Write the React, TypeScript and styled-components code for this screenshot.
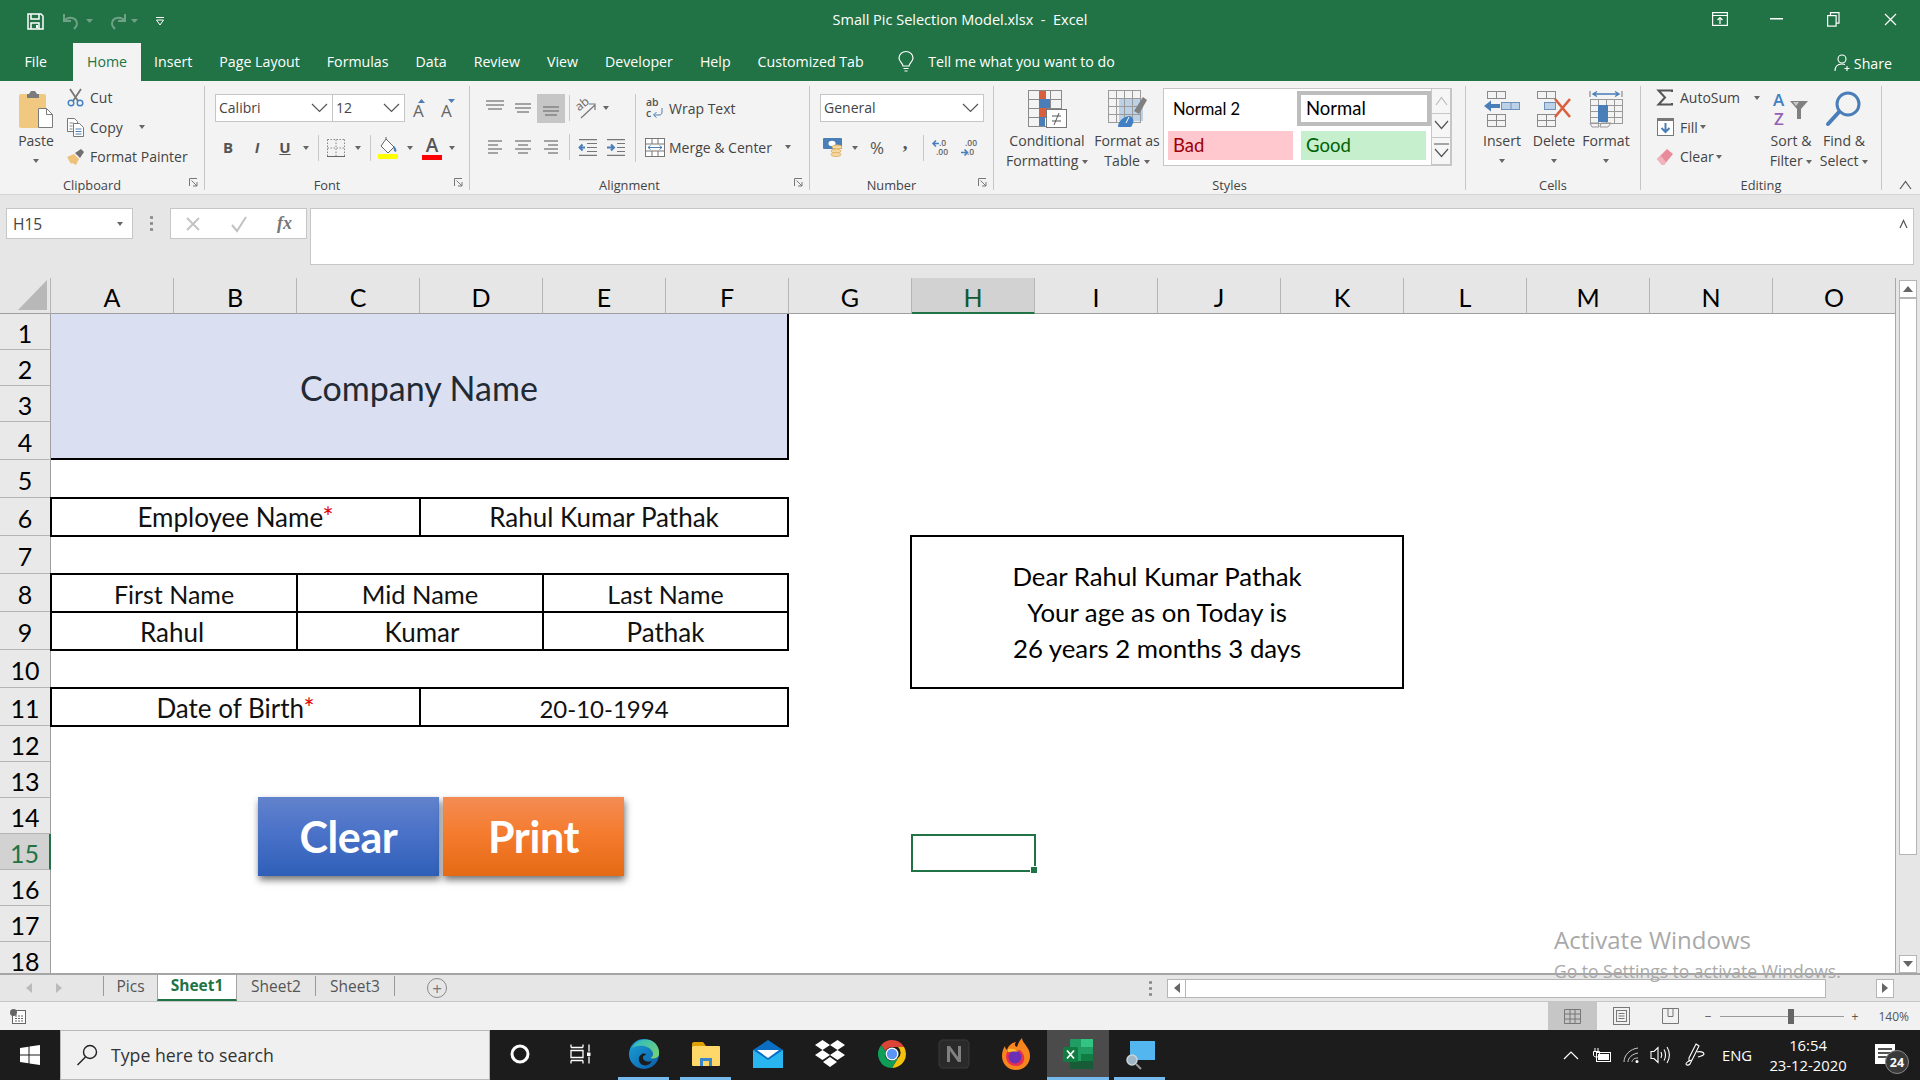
import React from "react";
import styled, { createGlobalStyle } from "styled-components";

const UI = `"Open Sans", "Noto Sans", sans-serif`;
const CAL = `Lato, "Liberation Sans", sans-serif`;
const GREEN = "#217346";

const Global = createGlobalStyle`
  html, body { margin: 0; padding: 0; background: #fff; }
  * { box-sizing: border-box; }
  svg { display: block; flex: none; overflow: visible; }
`;

const Page = styled.div`
  position: relative;
  width: 1920px;
  height: 1080px;
  overflow: hidden;
  display: flex;
  flex-direction: column;
  font-family: ${UI};
  color: #444;
`;

/* ---------- title bar ---------- */
const TitleBar = styled.div`
  height: 43px;
  background: ${GREEN};
  display: grid;
  grid-template-columns: 1fr auto 1fr;
  align-items: center;
  color: #fff;
`;
const Qat = styled.div`
  display: flex;
  align-items: center;
  padding-left: 27px;
`;
const Title = styled.div`
  font-size: 14.5px;
  padding-bottom: 4px;
`;
const WinButtons = styled.div`
  display: flex;
  justify-content: flex-end;
  align-items: center;
  padding-right: 1px;
  padding-bottom: 4px;
`;
const WinBtn = styled.div`
  width: 57px;
  display: flex;
  justify-content: center;
`;

/* ---------- tabs ---------- */
const TabRow = styled.div`
  height: 38px;
  background: ${GREEN};
  display: flex;
  align-items: stretch;
  padding-left: 11px;
  color: #fff;
  font-size: 14.2px;
`;
const Tab = styled.div<{ $active?: boolean; $after?: number }>`
  padding: 0 13.5px;
  margin-right: ${(p) => p.$after ?? 0}px;
  display: flex;
  align-items: center;
  background: ${(p) => (p.$active ? "#f3f3f3" : "transparent")};
  color: ${(p) => (p.$active ? GREEN : "#fff")};
`;
const TellMe = styled.div`
  display: flex;
  align-items: center;
  gap: 14px;
  margin-left: 21px;
`;
const Share = styled.div`
  margin-left: auto;
  padding-right: 28px;
  padding-top: 3px;
  display: flex;
  align-items: center;
  gap: 3px;
`;

/* ---------- ribbon ---------- */
const Ribbon = styled.div`
  height: 115px;
  background: #f3f3f3;
  border-bottom: 1px solid #d4d4d4;
  display: flex;
  padding-top: 5px;
`;
const Group = styled.div<{ $w: number }>`
  position: relative;
  width: ${(p) => p.$w}px;
  height: 104px;
  border-right: 1px solid #c6c6c6;
  display: flex;
  flex-direction: column;
`;
const GroupBody = styled.div<{ $pad?: number }>`
  flex: 1;
  display: flex;
  padding-left: ${(p) => p.$pad ?? 0}px;
  min-height: 0;
`;
const GroupLabel = styled.div<{ $launcher?: boolean }>`
  height: 16px;
  line-height: 16px;
  margin-top: -3px;
  transform: translateY(3px);
  text-align: center;
  font-size: 12.8px;
  color: #444;
  padding-right: ${(p) => (p.$launcher ? 20 : 0)}px;
`;
const Launcher = styled.div`
  position: absolute;
  right: 6px;
  bottom: 3px;
`;
const PasteBtn = styled.div`
  width: 62px;
  margin-left: 5px;
  padding-top: 4px;
  display: flex;
  flex-direction: column;
  align-items: center;
  font-size: 14px;
  line-height: 20px;
  flex: none;
`;
const PasteGap = styled.div`
  height: 3px;
`;
const SmallCol = styled.div<{ $w?: number }>`
  width: ${(p) => (p.$w ? `${p.$w}px` : "auto")};
  display: flex;
  flex-direction: column;
  gap: 5.5px;
  flex: none;
`;
const SmallRow = styled.div`
  height: 24px;
  display: flex;
  align-items: center;
  font-size: 14px;
  white-space: nowrap;
  gap: 6px;
`;
const IconBox = styled.div<{ $w: number }>`
  width: ${(p) => p.$w}px;
  display: flex;
  justify-content: center;
  flex: none;
`;
const ToolCol = styled.div`
  display: flex;
  flex-direction: column;
  padding-top: 8px;
  gap: 14px;
`;
const ToolRow = styled.div<{ $h?: number; $pad?: number }>`
  height: ${(p) => p.$h ?? 28}px;
  display: flex;
  align-items: center;
  padding-left: ${(p) => p.$pad ?? 0}px;
  font-size: 14px;
  white-space: nowrap;
`;
const Slot = styled.div<{ $w: number; $on?: boolean }>`
  width: ${(p) => p.$w}px;
  height: 100%;
  flex: none;
  display: flex;
  align-items: center;
  justify-content: center;
  background: ${(p) => (p.$on ? "#c6c6c6" : "transparent")};
`;
const VSep = styled.div<{ $tall?: boolean }>`
  width: 1px;
  height: ${(p) => (p.$tall ? 68 : 26)}px;
  margin-top: ${(p) => (p.$tall ? 40 : 0)}px;
  background: #c9c9c9;
`;
const Select = styled.div<{ $w: number }>`
  width: ${(p) => p.$w}px;
  height: 28px;
  background: #fff;
  border: 1px solid #c6c6c6;
  margin-right: -1px;
  padding: 0 4px 0 3px;
  display: flex;
  align-items: center;
  justify-content: space-between;
  font-size: 14px;
  color: #444;
`;
const Caret = styled.span<{ $gap?: number }>`
  display: inline-block;
  width: 0;
  height: 0;
  border: 3.5px solid transparent;
  border-top: 4px solid #666;
  border-bottom: none;
  margin-left: ${(p) => p.$gap ?? 0}px;
  vertical-align: middle;
  flex: none;
`;
const Glyph = styled.span<{ $bold?: boolean; $it?: boolean; $size?: number; $under?: boolean; $font?: string; $lift?: number }>`
  font-family: ${(p) => p.$font ?? UI};
  font-weight: ${(p) => (p.$bold ? 700 : 400)};
  font-style: ${(p) => (p.$it ? "italic" : "normal")};
  font-size: ${(p) => p.$size ?? 15}px;
  text-decoration: ${(p) => (p.$under ? "underline" : "none")};
  padding-bottom: ${(p) => p.$lift ?? 0}px;
  color: #555;
  line-height: 1;
`;
const ColorA = styled.div<{ $c: string }>`
  width: 20px;
  text-align: center;
  font-size: 19px;
  font-weight: 600;
  line-height: 19px;
  color: #555;
  border-bottom: 5px solid ${(p) => p.$c};
`;
const Big = styled.div<{ $w: number }>`
  width: ${(p) => p.$w}px;
  padding-top: 4px;
  flex: none;
  display: flex;
  flex-direction: column;
  align-items: center;
  font-size: 14.1px;
  line-height: 20px;
  white-space: nowrap;
`;
const BigIcon = styled.div`
  height: 38px;
  margin-bottom: 3px;
  display: flex;
  align-items: center;
`;
const BigCaret = styled.div`
  height: 20px;
  display: flex;
  align-items: center;
`;
const Gallery = styled.div`
  width: 289px;
  height: 78px;
  margin-top: 2px;
  background: #fff;
  border: 1px solid #c6c6c6;
  display: flex;
  flex: none;
`;
const StyleGrid = styled.div`
  width: 267px;
  display: grid;
  grid-template-columns: 129px 138px;
  grid-template-rows: 39px 37px;
`;
const StyleCell = styled.div<{ $bg?: string; $fg?: string; $sel?: boolean; $m: string; $pad: number; $size: number }>`
  font-family: ${CAL};
  font-size: ${(p) => p.$size}px;
  display: flex;
  align-items: center;
  padding-left: ${(p) => p.$pad}px;
  color: ${(p) => p.$fg ?? "#000"};
  margin: ${(p) => p.$m};
  background: ${(p) => p.$bg ?? "#fff"};
  border: ${(p) => (p.$sel ? "4px solid #bdbdbd" : "none")};
`;
const GalleryScroll = styled.div`
  width: 21px;
  display: flex;
  flex-direction: column;
`;
const ScrollCell = styled.div<{ $h: number }>`
  height: ${(p) => p.$h}px;
  border: 1px solid #c6c6c6;
  border-top: none;
  background: #f6f6f6;
  display: flex;
  flex-direction: column;
  align-items: center;
  justify-content: center;
  gap: 3px;
`;
const Collapse = styled.div`
  flex: 1;
  display: flex;
  align-items: flex-end;
  justify-content: center;
  padding: 0 0 4px 8px;
`;

/* ---------- formula bar ---------- */
const FormulaBar = styled.div`
  height: 83px;
  background: #e6e6e6;
  display: flex;
  align-items: flex-start;
  padding: 13px 0 0 6px;
`;
const NameBox = styled.div`
  width: 127px;
  height: 31px;
  background: #fff;
  border: 1px solid #c6c6c6;
  display: flex;
  align-items: center;
  justify-content: space-between;
  padding: 0 9px 0 6px;
  font-size: 15.5px;
`;
const Grip = styled.div`
  width: 37px;
  height: 31px;
  display: flex;
  align-items: center;
  justify-content: center;
`;
const FnBox = styled.div`
  width: 137px;
  height: 31px;
  background: #fff;
  border: 1px solid #c6c6c6;
  display: flex;
  align-items: center;
  padding-left: 14px;
  gap: 29px;
`;
const FxText = styled.span`
  font-family: "Liberation Serif", serif;
  font-style: italic;
  font-weight: 700;
  font-size: 18px;
  color: #777;
`;
const FormulaInput = styled.div`
  width: 1604px;
  height: 57px;
  margin-left: 3px;
  background: #fff;
  border: 1px solid #c6c6c6;
  display: flex;
  justify-content: flex-end;
  padding: 10px 5px 0 0;
`;

/* ---------- sheet ---------- */
const SheetArea = styled.div`
  height: 695px;
  display: flex;
  background: #e6e6e6;
`;
const Grid = styled.div`
  position: relative;
  width: 1896px;
  height: 695px;
  overflow: hidden;
  background: #fff;
  border-right: 1px solid #a8a8a8;
  display: grid;
  grid-template-columns: 51px repeat(15, 123px);
  grid-template-rows: 36px 36px 36px 36px 38px 38px repeat(6, 38px) repeat(7, 36px);
`;
const Corner = styled.div`
  background: #e6e6e6;
  border-bottom: 1px solid #9f9f9f;
  border-right: 1px solid #b5b5b5;
  display: flex;
  align-items: flex-end;
  justify-content: flex-end;
  padding: 0 3px 3px 0;
`;
const ColHead = styled.div<{ $on?: boolean }>`
  background: ${(p) => (p.$on ? "#d2d2d2" : "#e6e6e6")};
  border-right: 1px solid #b5b5b5;
  border-bottom: ${(p) => (p.$on ? `2px solid ${GREEN}` : "1px solid #9f9f9f")};
  font-family: ${CAL};
  font-size: 25px;
  color: ${(p) => (p.$on ? "#0f5a32" : "#000")};
  display: flex;
  align-items: center;
  justify-content: center;
  padding-top: 3px;
`;
const RowHead = styled.div<{ $on?: boolean; $row: number }>`
  grid-column: 1;
  grid-row: ${(p) => p.$row + 1};
  background: ${(p) => (p.$on ? "#d2d2d2" : "#e9e9e9")};
  border-bottom: 1px solid #b5b5b5;
  border-right: ${(p) => (p.$on ? `2px solid ${GREEN}` : "1px solid #9f9f9f")};
  font-family: ${CAL};
  font-size: 25px;
  padding-top: 2px;
  color: ${(p) => (p.$on ? GREEN : "#000")};
  display: flex;
  align-items: center;
  justify-content: center;
`;
const Banner = styled.div`
  grid-row: 2 / 6;
  grid-column: 2 / 8;
  background: #dae0f2;
  border-right: 2px solid #000;
  border-bottom: 2px solid #000;
  display: flex;
  align-items: center;
  justify-content: center;
  font-family: ${CAL};
  font-size: 34px;
  color: #222b35;
  padding-top: 2px;
`;
const Cell = styled.div<{ $row: number; $from: number; $to: number; $shift?: number; $size?: number }>`
  grid-row: ${(p) => p.$row + 1};
  grid-column: ${(p) => p.$from + 1} / ${(p) => p.$to + 2};
  margin: -1px ${(p) => (p.$to === 6 ? 0 : -1)}px -1px -1px;
  border: 2px solid #000;
  display: flex;
  align-items: center;
  justify-content: center;
  font-family: ${CAL};
  font-size: ${(p) => p.$size ?? 26}px;
  color: #111;
  padding-top: ${(p) => (p.$row === 6 ? 0 : 2)}px;
  padding-left: ${(p) => ((p.$shift ?? 0) > 0 ? p.$shift : 0)}px;
  padding-right: ${(p) => ((p.$shift ?? 0) < 0 ? -(p.$shift as number) : 0)}px;
`;
const Star = styled.span`
  color: #e00000;
`;
const Selection = styled.div`
  position: absolute;
  left: 911px;
  top: 556px;
  width: 125px;
  height: 38px;
  border: 2px solid ${GREEN};
  &::after {
    content: "";
    position: absolute;
    right: -4px;
    bottom: -4px;
    width: 6px;
    height: 6px;
    background: ${GREEN};
    border: 1px solid #fff;
  }
`;
const MessageBox = styled.div`
  position: absolute;
  left: 910px;
  top: 257px;
  width: 494px;
  height: 154px;
  border: 2px solid #000;
  background: #fff;
  display: flex;
  flex-direction: column;
  align-items: center;
  justify-content: center;
  font-family: ${CAL};
  font-size: 25.8px;
  line-height: 36px;
  color: #000;
`;
const MacroButton = styled.div<{ $left: number; $top: string; $mid: string; $bot: string }>`
  position: absolute;
  left: ${(p) => p.$left}px;
  top: 519px;
  width: 181px;
  height: 79px;
  background: linear-gradient(${(p) => p.$top}, ${(p) => p.$mid} 45%, ${(p) => p.$bot});
  box-shadow: 1px 4px 7px rgba(0, 0, 0, 0.55);
  display: flex;
  align-items: center;
  justify-content: center;
  font-family: ${CAL};
  font-weight: 700;
  font-size: 43px;
  letter-spacing: -0.4px;
  color: #fff;
`;
const VScroll = styled.div`
  width: 24px;
  padding: 0 3px 0 3px;
  display: flex;
  flex-direction: column;
`;
const ScrollBtn = styled.div<{ $w?: number; $h?: number }>`
  width: ${(p) => (p.$w ? `${p.$w}px` : "100%")};
  height: ${(p) => (p.$h ? `${p.$h}px` : "100%")};
  flex: none;
  background: #fff;
  border: 1px solid #b5b5b5;
  display: flex;
  align-items: center;
  justify-content: center;
`;
const VThumb = styled.div`
  height: 557px;
  background: #fff;
  border: 1px solid #b5b5b5;
`;
const VGap = styled.div<{ $h: number }>`
  height: ${(p) => p.$h}px;
  flex: none;
`;

/* ---------- sheet tabs ---------- */
const TabBar = styled.div`
  height: 29px;
  background: #e6e6e6;
  border-top: 2px solid #a5a5a5;
  border-bottom: 1px solid #c6c6c6;
  display: flex;
  align-items: center;
  font-size: 15.5px;
  color: #555;
`;
const NavArrows = styled.div`
  width: 103px;
  height: 100%;
  display: flex;
  align-items: center;
  padding-left: 26px;
  gap: 24px;
`;
const TabDivider = styled.div`
  width: 1px;
  height: 20px;
  margin-top: -4px;
  background: #9a9a9a;
`;
const SheetTab = styled.div<{ $active?: boolean; $w: number }>`
  width: ${(p) => p.$w}px;
  height: 100%;
  display: flex;
  align-items: center;
  justify-content: center;
  padding-bottom: 5px;
  background: ${(p) => (p.$active ? "#fff" : "transparent")};
  font-weight: ${(p) => (p.$active ? 700 : 400)};
  color: ${(p) => (p.$active ? GREEN : "#555")};
  border-bottom: ${(p) => (p.$active ? `2px solid ${GREEN}` : "none")};
  border-left: ${(p) => (p.$active ? "1px solid #a5a5a5" : "none")};
  border-right: ${(p) => (p.$active ? "1px solid #a5a5a5" : "none")};
`;
const AddSheet = styled.div`
  margin-left: 32px;
  width: 20px;
  height: 20px;
  border: 1.5px solid #8a8a8a;
  border-radius: 50%;
  display: flex;
  align-items: center;
  justify-content: center;
  font-size: 17px;
  line-height: 1;
  color: #777;
`;
const HScroll = styled.div`
  margin-right: 26px;
  width: 727px;
  height: 19px;
  display: flex;
  align-items: center;
`;
const HThumb = styled.div`
  width: 640px;
  height: 19px;
  background: #fff;
  border: 1px solid #b5b5b5;
  border-left: none;
`;
const HFill = styled.div`
  flex: 1;
`;
const HGrip = styled.div`
  margin-left: auto;
  margin-right: 15px;
`;

/* ---------- status bar ---------- */
const StatusBar = styled.div`
  height: 28px;
  background: #f1f1f1;
  display: flex;
  align-items: center;
  padding-left: 10px;
  font-size: 12px;
  color: #555;
`;
const Views = styled.div`
  margin-left: auto;
  height: 100%;
  display: flex;
  align-items: center;
`;
const ViewBtn = styled.div<{ $on?: boolean }>`
  width: 49px;
  height: 100%;
  display: flex;
  align-items: center;
  justify-content: center;
  background: ${(p) => (p.$on ? "#c6c6c6" : "transparent")};
`;
const Zoom = styled.div`
  display: flex;
  align-items: center;
  gap: 8px;
  margin-left: 10px;
  padding-right: 11px;
`;
const ZoomTrack = styled.div`
  position: relative;
  width: 124px;
  height: 1px;
  background: #9a9a9a;
`;
const ZoomThumb = styled.div`
  position: absolute;
  left: 68px;
  top: -7px;
  width: 6px;
  height: 15px;
  background: #666;
`;
const ZoomPct = styled.div`
  margin-left: 12px;
  font-size: 12px;
`;

/* ---------- taskbar ---------- */
const Taskbar = styled.div`
  height: 50px;
  background: #1c1c1c;
  display: flex;
  align-items: stretch;
  color: #fff;
`;
const StartBtn = styled.div`
  width: 60px;
  display: flex;
  align-items: center;
  justify-content: center;
`;
const SearchBox = styled.div`
  width: 430px;
  background: #f0f0f0;
  border: 1px solid #b8b8b8;
  display: flex;
  align-items: center;
  padding-left: 15px;
  gap: 13px;
  font-size: 17.7px;
  color: #333;
`;
const TaskSlot = styled.div<{ $w?: number; $open?: boolean; $active?: boolean; $ml?: number }>`
  position: relative;
  width: ${(p) => p.$w ?? 62}px;
  margin-left: ${(p) => p.$ml ?? 0}px;
  display: flex;
  align-items: center;
  justify-content: center;
  padding-bottom: 3px;
  background: ${(p) => (p.$active ? "#4b4b4b" : "transparent")};
  flex: none;
  &::after {
    content: "";
    display: ${(p) => (p.$open ? "block" : "none")};
    position: absolute;
    bottom: 0;
    left: ${(p) => (p.$active ? 0 : 5)}px;
    right: ${(p) => (p.$active ? 0 : 6)}px;
    height: 3px;
    background: #76b9ed;
  }
`;
const Tray = styled.div`
  margin-left: auto;
  display: flex;
  align-items: center;
  font-size: 14.8px;
`;
const TrayItem = styled.div<{ $w: number }>`
  width: ${(p) => p.$w}px;
  display: flex;
  justify-content: center;
`;
const Clock = styled.div`
  width: 100px;
  text-align: center;
  line-height: 20px;
  font-size: 14.8px;
`;
const Notify = styled.div`
  position: relative;
  width: 62px;
  height: 100%;
  padding-right: 8px;
  display: flex;
  align-items: center;
  justify-content: center;
`;
const Badge = styled.div`
  position: absolute;
  left: 27px;
  top: 20px;
  width: 24px;
  height: 24px;
  border-radius: 50%;
  background: #3a3a3a;
  border: 1px solid #888;
  font-size: 12.5px;
  font-weight: 700;
  display: flex;
  align-items: center;
  justify-content: center;
`;

const Watermark = styled.div`
  position: absolute;
  left: 1554px;
  top: 923px;
  color: #a9a9a9;
  pointer-events: none;
`;
const WmTitle = styled.div`
  font-size: 24px;
  line-height: 34px;
`;
const WmSub = styled.div`
  font-size: 17.5px;
  line-height: 24px;
  margin-top: 2px;
`;

/* ---------- icons ---------- */
const BLUE = "#4a7eb8";
const Lines = ({ rows, w = 26, h = 22 }: { rows: number[][]; w?: number; h?: number }) => (
  <svg width={w} height={h} stroke="#777" strokeWidth="1.3">
    {rows.map((r, i) => (
      <line key={i} x1={r[0]} x2={r[1]} y1={r[2]} y2={r[2]} />
    ))}
  </svg>
);
const Cells = ({ x, y, cw, ch, nx, ny, c = "#8a8a8a" }: { x: number; y: number; cw: number; ch: number; nx: number; ny: number; c?: string }) => (
  <g stroke={c} fill="none" strokeWidth="1">
    {Array.from({ length: ny }).map((_, r) =>
      Array.from({ length: nx }).map((_, k) => <rect key={`${r}${k}`} x={x + k * cw + 0.5} y={y + r * ch + 0.5} width={cw} height={ch} />)
    )}
  </g>
);

const SaveIcon = () => (
  <svg width="17" height="17" fill="none" stroke="#fff" strokeWidth="1.5">
    <path d="M1 1h13l2 2v13H1z" />
    <path d="M4 1v5h8V1M4 16v-6h8v6" />
    <rect x="9" y="12" width="2" height="3" fill="#fff" stroke="none" />
  </svg>
);
const UndoIcon = ({ flip }: { flip?: boolean }) => (
  <svg width="20" height="18" fill="none" stroke="#6ea186" strokeWidth="2" style={flip ? { transform: "scaleX(-1)" } : undefined}>
    <path d="M2 2v7h7M2 9c4-5 13-4 13 3 0 2-1 3-3 5" />
  </svg>
);
const DimCaret = () => (
  <svg width="7" height="4">
    <path d="M0 0h7L3.500 4z" fill="#6ea186" />
  </svg>
);
const QatMore = () => (
  <svg width="10" height="10" fill="none" stroke="#fff">
    <path d="M1 1.500h8M1.500 4l3.500 5 3.500-5z" />
  </svg>
);
const RibbonOpt = () => (
  <svg width="16" height="14" fill="none" stroke="#fff" strokeWidth="1.2">
    <rect x="0.6" y="0.6" width="14.8" height="12.8" />
    <path d="M1 3.500h14M8 12V6M5.500 8L8 5.500 10.500 8" />
  </svg>
);
const MinIcon = () => (
  <svg width="13" height="2">
    <rect width="13" height="1.5" fill="#fff" />
  </svg>
);
const RestoreIcon = () => (
  <svg width="13" height="15" fill="none" stroke="#fff" strokeWidth="1.2">
    <rect x="0.6" y="3.6" width="8.5" height="10.5" />
    <path d="M3.500 3.500V.6h8.500v10.500H9" />
  </svg>
);
const CloseIcon = () => (
  <svg width="13" height="13" stroke="#fff" strokeWidth="1.2">
    <path d="M1 1l11 11M12 1L1 12" />
  </svg>
);
const Bulb = () => (
  <svg width="16" height="22" fill="none" stroke="#fff" strokeWidth="1.2">
    <path d="M5 15c0-3-4-4-4-8a7 6.500 0 0 1 14 0c0 4-4 5-4 8z" />
    <path d="M5.500 17.500h5M6.500 20h3" />
  </svg>
);
const ShareIcon = () => (
  <svg width="17" height="18" fill="none" stroke="#fff" strokeWidth="1.1">
    <circle cx="8" cy="5" r="4" />
    <path d="M1 17c0-5 3-7 7-7 1 0 2 .2 3 .6M13 12v5M10.500 14.500h5" />
  </svg>
);
const Chevron = ({ up, c = "#555", w = 17 }: { up?: boolean; c?: string; w?: number }) => (
  <svg width={w} height="10" fill="none" stroke={c} strokeWidth="1.2">
    <path d={up ? `M1 9L${w / 2} 1.500 ${w - 1} 9` : `M1 1L${w / 2} 8.500 ${w - 1} 1`} />
  </svg>
);
const PasteIcon = () => (
  <svg width="34" height="38">
    <rect x="0" y="4" width="27" height="34" rx="2" fill="#f0c880" />
    <path d="M8 4h2l2-3h4l2 3h2v4H8z" fill="#7b7b7b" />
    <path d="M19.500 18.500h8l6 6v13h-14z" fill="#fff" stroke="#7b7b7b" />
    <path d="M27.500 18.500v6h6" fill="none" stroke="#7b7b7b" />
  </svg>
);
const CutIcon = () => (
  <svg width="17" height="19" fill="none">
    <path d="M3 1l8 12M14 1L6 13" stroke="#777" strokeWidth="1.8" />
    <circle cx="4" cy="15" r="2.800" stroke="#3f7fc2" strokeWidth="1.4" />
    <circle cx="13" cy="15" r="2.800" stroke="#3f7fc2" strokeWidth="1.4" />
  </svg>
);
const CopyIcon = () => (
  <svg width="17" height="19" fill="#fff" stroke="#777">
    <path d="M.5.500h7l3 3v10H.5z" />
    <path d="M6.500 5.500h6l4 4v9h-10z" />
    <path d="M8.500 11h6M8.500 13.500h6M8.500 16h6" stroke="#4a7eb8" />
    <path d="M2.500 5h4M2.500 8h3M2.500 11h3" stroke="#888" />
  </svg>
);
const BrushIcon = () => (
  <svg width="18" height="16">
    <path d="M0 8l7-3 5 5-3 6-4-2-1 1z" fill="#efc27a" />
    <path d="M8 4l6-4 3 3-4 6z" fill="#707070" />
  </svg>
);
const GrowA = ({ down }: { down?: boolean }) => (
  <svg width="20" height="22">
    <text x="5" y="20" fontFamily="Open Sans" fontSize="17" fill="#666">
      A
    </text>
    <path d={down ? "M12 2h7l-3.500 4z" : "M10 6h7l-3.500-4z"} fill={BLUE} />
  </svg>
);
const BorderIcon = () => (
  <svg width="18" height="18" fill="none" stroke="#888" strokeDasharray="1.5 1.5">
    <path d="M.5.500h17M.5 9h17M.5.500v17M9 .500v17M17.500.500v17" />
    <path d="M0 17.500h18" strokeDasharray="none" stroke="#666" />
  </svg>
);
const FillIcon = () => (
  <svg width="20" height="22">
    <path d="M8 2l8 8-6 6-7-7z" fill="#fff" stroke="#666" />
    <path d="M8 2V0" stroke="#666" />
    <path d="M16 9c2 2 3 4 2 6-2 0-3-3-2-6z" fill={BLUE} />
    <rect y="17" width="20" height="5" fill="#ffff00" />
  </svg>
);
const OrientIcon = () => (
  <svg width="20" height="22" fill="none">
    <text x="0" y="11" fontFamily="Open Sans" fontSize="12" fill="#666" transform="rotate(-38 6 10)">
      ab
    </text>
    <path d="M4 21L18 8M12 7h6v6" stroke="#777" strokeWidth="1.2" />
  </svg>
);
const WrapIcon = () => (
  <svg width="18" height="22">
    <text x="0" y="9" fontFamily="Open Sans" fontWeight="600" fontSize="10.5" fill="#555">
      ab
    </text>
    <text x="0" y="20" fontFamily="Open Sans" fontWeight="600" fontSize="10.5" fill="#555">
      c
    </text>
    <path d="M16 11v4c0 2-1 3-3 3H8M10.500 15l-3 3 3 2.500" fill="none" stroke={BLUE} />
  </svg>
);
const MergeIcon = () => (
  <svg width="20" height="19" fill="none" stroke="#777">
    <rect x=".5" y=".5" width="19" height="18" fill="#fff" />
    <path d="M.5 6h19M.5 13h19M7 .500V6M13 .500V6M7 13v5.500M13 13v5.500" />
    <path d="M3 9.500h14M5.500 7.500l-2.500 2 2.500 2M14.500 7.500l2.500 2-2.500 2" stroke={BLUE} />
  </svg>
);
const IndentIcon = ({ out }: { out?: boolean }) => (
  <svg width="19" height="17" fill="none" stroke="#777" strokeWidth="1.2">
    <path d={out ? "M0 .6h18M8 4.500h10M8 8.500h10M8 12.500h10M0 16.400h18" : "M0 .6h18M10 4.500h8M10 8.500h8M10 12.500h8M0 16.400h18"} />
    <path d={out ? "M6 8.500H1M3.500 5.500L.6 8.500l3 3" : "M0 8.500h6M4 5.500l3 3-3 3"} stroke={BLUE} strokeWidth="2" />
  </svg>
);
const CurrencyIcon = () => (
  <svg width="20" height="19">
    <rect width="19" height="11" rx="1" fill={BLUE} />
    <ellipse cx="9" cy="5.500" rx="3.500" ry="2.700" fill="#fff" />
    <ellipse cx="14" cy="9" rx="5" ry="2" fill="#f3d8a3" stroke="#e2b56a" />
    <ellipse cx="13" cy="13" rx="5" ry="2" fill="#f3d8a3" stroke="#e2b56a" />
    <ellipse cx="13" cy="16.500" rx="5" ry="2" fill="#f3d8a3" stroke="#e2b56a" />
  </svg>
);
const Decimal = ({ more }: { more?: boolean }) => (
  <svg width="16" height="18" fontFamily="Open Sans" fontSize="8.500" fontWeight="600" fill="#666">
    <text x={more ? 6 : 4} y="7">
      {more ? ".0" : ".00"}
    </text>
    <text x={more ? 3 : 6} y="16">
      {more ? ".00" : ".0"}
    </text>
    <path d={more ? "M0 4.500h6M3 1.500l-3 3 3 3" : "M0 13.500h6M3.500 10.500l3 3-3 3"} stroke={BLUE} strokeWidth="1.600" fill="none" />
  </svg>
);
const CondIcon = () => (
  <svg width="39" height="38">
    <Cells x={0} y={0} cw={11} ch={9} nx={3} ny={4} />
    <rect x="11" y="1" width="7" height="8" fill="#d9603c" />
    <rect x="11" y="9" width="11" height="9" fill="#4a7eb8" />
    <rect x="11" y="18" width="9" height="9" fill="#d9603c" />
    <rect x="11" y="27" width="6" height="9" fill="#4a7eb8" />
    <rect x="18.500" y="19.500" width="20" height="18" fill="#fff" stroke="#777" />
    <path d="M24 26h9M24 31h9M31 23l-5 12" stroke="#555" fill="none" />
  </svg>
);
const TableIcon = () => (
  <svg width="39" height="38">
    <rect x="11" y="8" width="24" height="23" fill="#bcd0e6" />
    <Cells x={0} y={0} cw={8} ch={8} nx={4} ny={4} c="#9a9a9a" />
    <path d="M26 21l9-14 4 3-8 14z" fill="#808080" />
    <path d="M10 37c0-6 6-11 12-11 3 1 4 5 3 7-1 2-1 4-3 4z" fill="#3f7fc2" />
    <path d="M21 27l-3 6" stroke="#fff" />
  </svg>
);
const InsertIcon = () => (
  <svg width="37" height="36">
    <Cells x={3} y={0} cw={9} ch={7} nx={2} ny={1} />
    <rect x="17.500" y="11.500" width="18" height="7" fill="#bcd0e6" stroke="#6d92ba" />
    <path d="M27 11v8" stroke="#6d92ba" />
    <path d="M0 15l7-5.500v3.500h9v4H7v3.500z" fill={BLUE} />
    <Cells x={3} y={23} cw={9} ch={6} nx={2} ny={2} />
  </svg>
);
const DeleteIcon = () => (
  <svg width="37" height="36">
    <Cells x={1} y={0} cw={9} ch={7} nx={2} ny={1} />
    <rect x="8.500" y="11.500" width="11" height="7" fill="#bcd0e6" stroke="#6d92ba" />
    <Cells x={1} y={23} cw={9} ch={6} nx={2} ny={2} />
    <path d="M19 8l15 18M34 8L19 26" stroke="#d9603c" strokeWidth="2.600" />
  </svg>
);
const FormatIcon = () => (
  <svg width="34" height="38" fill="none">
    <path d="M1 1v6M33 1v6" stroke="#777" />
    <path d="M4 4h26M8 1.500L4 4l4 2.500M26 1.500L30 4l-4 2.500" stroke={BLUE} strokeWidth="1.400" />
    <Cells x={1} y={9} cw={8} ch={6} nx={4} ny={4} c="#999" />
    <rect x="9" y="15" width="10" height="17" fill={BLUE} />
    <path d="M1 33h8l1 4H3zM12 33h10l-3 4h-8z" stroke="#999" />
  </svg>
);
const SigmaIcon = () => (
  <svg width="16" height="17" fill="none" stroke="#555" strokeWidth="2">
    <path d="M15 3V1.500H1.500L8 8.500 1.500 15.500H15V14" />
  </svg>
);
const FillDown = () => (
  <svg width="17" height="18" fill="#fff">
    <rect x=".5" y=".5" width="16" height="17" stroke="#777" />
    <rect width="17" height="3" fill="#777" />
    <path d="M8.500 5v9M4.500 10l4 4 4-4" stroke={BLUE} strokeWidth="2" fill="none" />
  </svg>
);
const Eraser = () => (
  <svg width="16" height="16">
    <path d="M0 10L10 0l6 5-9 11H5z" fill="#e98b9a" />
    <path d="M0 10l5 6h2l2-3-5-6z" fill="#f1b4be" />
  </svg>
);
const SortIcon = () => (
  <svg width="36" height="34">
    <text x="0" y="14" fontFamily="Open Sans" fontWeight="600" fontSize="17" fill="#3f7fc2">
      A
    </text>
    <text x="1" y="33" fontFamily="Open Sans" fontWeight="600" fontSize="17" fill="#9561b6">
      Z
    </text>
    <path d="M17 9h18l-7 8v10h-4V17z" fill="#808080" />
    <path d="M20 10h6l-3 4z" fill="#c9c9c9" />
  </svg>
);
const FindIcon = () => (
  <svg width="36" height="36" fill="none" stroke={BLUE}>
    <circle cx="22" cy="13" r="11" strokeWidth="3" />
    <path d="M13 21L2 33" strokeWidth="4" strokeLinecap="round" />
  </svg>
);
const LauncherIcon = () => (
  <svg width="9" height="9" fill="none" stroke="#777">
    <path d="M.5 8V.5H8M2.500 2.500L8 8M8 4v4H4" />
  </svg>
);
const TriLeft = ({ c = "#bbb" }: { c?: string }) => (
  <svg width="6" height="10">
    <path d="M6 0v10L0 5z" fill={c} />
  </svg>
);
const TriRight = ({ c = "#bbb" }: { c?: string }) => (
  <svg width="6" height="10">
    <path d="M0 0v10l6-5z" fill={c} />
  </svg>
);
const TriV = ({ down }: { down?: boolean }) => (
  <svg width="10" height="6">
    <path d={down ? "M0 0h10L5 6z" : "M0 6h10L5 0z"} fill="#666" />
  </svg>
);
const MacroIcon = () => (
  <svg width="16" height="15">
    <rect x="2.500" y="1.500" width="13" height="13" fill="#fff" stroke="#666" />
    <circle cx="3.500" cy="3.500" r="3.500" fill="#666" />
    <path d="M5 7h2M8 7h2M11 7h2M5 9.500h2M8 9.500h2M11 9.500h2M5 12h2M8 12h2M11 12h2" stroke="#666" />
  </svg>
);
const NormalView = () => (
  <svg width="17" height="15" fill="none" stroke="#777">
    <path d="M.5.5h16v14H.5zM.5 5h16M.5 10h16M6 .5v14M11 .5v14" />
  </svg>
);
const PageView = () => (
  <svg width="17" height="18" fill="none" stroke="#777">
    <rect x=".5" y=".5" width="16" height="17" />
    <rect x="3.500" y="3.500" width="10" height="11" />
    <path d="M5.500 6.500h6M5.500 9h6M5.500 11.500h6" />
  </svg>
);
const BreakView = () => (
  <svg width="17" height="16" fill="none" stroke="#777">
    <path d="M.5.500h16v15H.5zM6 .5v8h5V.5" />
  </svg>
);
const WinLogo = () => (
  <svg width="20" height="20" fill="#fff">
    <path d="M0 3l8.500-1.200v7.700H0zM9.500 1.600L20 0v9.500H9.500zM0 10.500h8.500v7.700L0 17zM9.500 10.500H20V20L9.500 18.400z" />
  </svg>
);
const Lens = () => (
  <svg width="22" height="22" fill="none" stroke="#222" strokeWidth="1.400">
    <circle cx="14" cy="8" r="6.500" />
    <path d="M9.500 13L1.500 21" />
  </svg>
);
const CortanaIcon = () => (
  <svg width="20" height="20" fill="none" stroke="#fff" strokeWidth="3">
    <circle cx="10" cy="10" r="8" />
  </svg>
);
const TaskViewIcon = () => (
  <svg width="20" height="20" fill="none" stroke="#fff" strokeWidth="1.300">
    <path d="M1 3.500h12M1 .5v3M13 .5v3M1 6.500h12v7H1zM1 16.500h12M1 19.500v-3M13 19.500v-3M19 .5v7M19 12.500v7" />
    <rect x="17" y="8.500" width="3.500" height="3.500" fill="#fff" stroke="none" />
  </svg>
);
const EdgeIcon = () => (
  <svg width="30" height="30">
    <defs>
      <linearGradient id="edgeA" x1="0" y1="0" x2="1" y2="1">
        <stop offset="0" stopColor="#1aa3d9" />
        <stop offset="1" stopColor="#0c5aa8" />
      </linearGradient>
      <linearGradient id="edgeB" x1="0" y1="0" x2="1" y2="1">
        <stop offset="0" stopColor="#2bb7c9" />
        <stop offset="1" stopColor="#7bd46b" />
      </linearGradient>
    </defs>
    <circle cx="15" cy="15" r="15" fill="url(#edgeA)" />
    <path d="M3 9C6 2 14-1 21 1c6 2 10 8 9 15-1 3-5 4-9 3 3-1 4-4 2-7-3-5-13-7-20-3z" fill="url(#edgeB)" />
    <path d="M23 22c-2 4-7 6-11 3-3-3-3-8 1-10 2-1 4 0 4 1-3 0-4 3-2 5 2 2 5 2 8 1z" fill="#1c1c1c" />
  </svg>
);
const FolderIcon = () => (
  <svg width="28" height="26">
    <path d="M0 3a2 2 0 0 1 2-2h9l3 4H0z" fill="#e0a100" />
    <rect y="5" width="28" height="20" rx="1" fill="#ffd869" />
    <path d="M8 25v-8h12v8h-3v-5h-6v5z" fill="#3a86c8" />
  </svg>
);
const MailIcon = () => (
  <svg width="30" height="28">
    <path d="M0 10L15 0l15 10v18H0z" fill="#0a6fc2" />
    <path d="M4 10h22l-11 8z" fill="#fff" />
    <path d="M0 10l15 10 15-10v18H0z" fill="#29b6f0" />
  </svg>
);
const DropboxIcon = () => (
  <svg width="30" height="28" fill="#fff">
    <path d="M7.500 0L15 5 7.500 10 0 5zM22.500 0L30 5l-7.500 5L15 5zM7.500 10L15 15l-7.500 5L0 15zM22.500 10L30 15l-7.500 5L15 15zM15 17l7 5-7 5-7-5z" />
  </svg>
);
const ChromeIcon = () => (
  <svg width="28" height="28" viewBox="0 0 28 28">
    <path d="M14 0a14 14 0 0 1 12.100 7H14a7 7 0 0 0-6.500 4.500L3.300 5A14 14 0 0 1 14 0z" fill="#db4437" />
    <path d="M26.100 7A14 14 0 0 1 14 28l6-10a7 7 0 0 0 0-11z" fill="#f4c20d" />
    <path d="M14 28A14 14 0 0 1 3.300 5l4.200 6.500A7 7 0 0 0 14 21l6-3z" fill="#0f9d58" />
    <circle cx="14" cy="14" r="6.500" fill="#fff" />
    <circle cx="14" cy="14" r="5.200" fill="#5a95f5" />
  </svg>
);
const NIcon = () => (
  <svg width="30" height="30">
    <path d="M2 1h26l2 3v22l-2 3H2l-2-3V4z" fill="#2a2a2a" stroke="#3a3a3a" />
    <path d="M8 23V7h3l8 11V7h3v16h-3L11 12v11z" fill="#808080" />
  </svg>
);
const FirefoxIcon = () => (
  <svg width="28" height="32">
    <path d="M14 32C6 32 0 26 0 18 0 14 1 11 3 8c0 2 1 3 2 4 1-4 4-7 9-8-2 3-1 4 1 5 1-3 2-6 5-9 0 5 8 9 8 18 0 8-6 14-14 14z" fill="#f7841e" />
    <path d="M14 28c-6 0-10-4-10-10 0-2 1-4 2-5 4 1 8 0 12-1 3 3 5 6 4 10-1 4-4 6-8 6z" fill="#e8304c" />
    <circle cx="13" cy="19" r="6.500" fill="#6b2fb5" />
    <path d="M6 11c4-1 8 0 10 3-3-1-8 0-10 0z" fill="#ffbd2e" />
  </svg>
);
const ExcelIcon = () => (
  <svg width="30" height="30">
    <rect x="7" y="0" width="23" height="30" rx="1" fill="#1f9d62" />
    <rect x="18" y="0" width="12" height="8" fill="#33c481" />
    <rect x="18" y="15" width="12" height="8" fill="#107c41" />
    <rect x="7" y="22" width="23" height="8" fill="#185c37" />
    <rect x="0" y="8" width="15" height="15" rx="1" fill="#107c41" />
    <path d="M4 11.500l7 8M11 11.500l-7 8" stroke="#fff" strokeWidth="1.800" />
  </svg>
);
const SearchApp = () => (
  <svg width="30" height="30" fill="none">
    <rect x="5" y="2" width="25" height="19" fill="#54b6ee" />
    <circle cx="7" cy="21" r="5" fill="#9fb6c4" stroke="#c9d4da" strokeWidth="1.500" />
    <path d="M11 25l5 5" stroke="#9a9a9a" strokeWidth="2" />
  </svg>
);
const TrayChevron = () => (
  <svg width="16" height="9" fill="none" stroke="#fff" strokeWidth="1.200">
    <path d="M1 8l7-7 7 7" />
  </svg>
);
const BatteryIcon = () => (
  <svg width="20" height="14" fill="none" stroke="#fff">
    <path d="M4 0v3M7 0v3M2.500 3.500h6V7c0 1-1 2-3 2s-3-1-3-2z" />
    <rect x="5.500" y="4.500" width="14" height="9" />
    <rect x="7" y="6" width="11" height="6" fill="#fff" stroke="none" />
  </svg>
);
const WifiIcon = () => (
  <svg width="16" height="16" fill="none" stroke="#ccc" strokeWidth="1">
    <path d="M1 15C1 8 7 2 15 1M5 15c0-4 4-8 10-9M9 15c0-2 2-4 6-4" />
    <circle cx="14" cy="14.500" r="1.500" fill="#fff" stroke="none" />
  </svg>
);
const VolumeIcon = () => (
  <svg width="20" height="18" fill="none" stroke="#fff" strokeWidth="1.100">
    <path d="M1 5.500h3L8 1.500v15l-4-4H1zM11 6c1 2 1 4 0 6M14 3.500c2 3 2 8 0 11M17 1c3 5 3 11 0 16" />
  </svg>
);
const PenIcon = () => (
  <svg width="22" height="24" fill="none" stroke="#fff" strokeWidth="1.100">
    <path d="M12 1l3 2-7 14-3 1 0-3zM13 9c3-1 7 0 7 2s-4 2-6 3M6 18c-2 0-4 2-4 3s2 2 4 0l2-4" />
  </svg>
);
const NotifyIcon = () => (
  <svg width="20" height="22">
    <rect y="0" width="20" height="20" fill="#fff" />
    <path d="M3 5h14M3 9h14M3 13h14" stroke="#1c1c1c" strokeWidth="1.300" />
  </svg>
);
const GripDots = () => <Lines w={3} h={15} rows={[[0, 3, 1], [0, 3, 2], [0, 3, 7], [0, 3, 8], [0, 3, 13], [0, 3, 14]]} />;

const COLS = "ABCDEFGHIJKLMNO".split("");
const ROWS = Array.from({ length: 18 }, (_, i) => i + 1);

export default function App() {
  return (
    <Page>
      <Global />
      <TitleBar>
        <Qat>
          <SaveIcon />
          <IconBox $w={18} />
          <UndoIcon />
          <IconBox $w={15}>
            <DimCaret />
          </IconBox>
          <IconBox $w={10} />
          <UndoIcon flip />
          <IconBox $w={15}>
            <DimCaret />
          </IconBox>
          <IconBox $w={13} />
          <QatMore />
        </Qat>
        <Title>Small Pic Selection Model.xlsx&nbsp; -&nbsp; Excel</Title>
        <WinButtons>
          <WinBtn>
            <RibbonOpt />
          </WinBtn>
          <WinBtn>
            <MinIcon />
          </WinBtn>
          <WinBtn>
            <RestoreIcon />
          </WinBtn>
          <WinBtn>
            <CloseIcon />
          </WinBtn>
        </WinButtons>
      </TitleBar>

      <TabRow>
        <Tab $after={13}>File</Tab>
        <Tab $active>Home</Tab>
        <Tab>Insert</Tab>
        <Tab>Page Layout</Tab>
        <Tab>Formulas</Tab>
        <Tab>Data</Tab>
        <Tab>Review</Tab>
        <Tab>View</Tab>
        <Tab>Developer</Tab>
        <Tab>Help</Tab>
        <Tab>Customized Tab</Tab>
        <TellMe>
          <Bulb />
          <span>Tell me what you want to do</span>
        </TellMe>
        <Share>
          <ShareIcon />
          Share
        </Share>
      </TabRow>

      <Ribbon>
        <Group $w={205}>
          <GroupBody>
            <PasteBtn>
              <PasteIcon />
              <PasteGap />
              Paste
              <BigCaret>
                <Caret />
              </BigCaret>
            </PasteBtn>
            <SmallCol>
              <SmallRow>
                <IconBox $w={17}>
                  <CutIcon />
                </IconBox>
                Cut
              </SmallRow>
              <SmallRow>
                <IconBox $w={17}>
                  <CopyIcon />
                </IconBox>
                Copy
                <Caret $gap={10} />
              </SmallRow>
              <SmallRow>
                <IconBox $w={17}>
                  <BrushIcon />
                </IconBox>
                Format Painter
              </SmallRow>
            </SmallCol>
          </GroupBody>
          <GroupLabel $launcher>Clipboard</GroupLabel>
          <Launcher>
            <LauncherIcon />
          </Launcher>
        </Group>

        <Group $w={265}>
          <GroupBody $pad={10}>
            <ToolCol>
              <ToolRow>
                <Select $w={118}>
                  Calibri
                  <Chevron />
                </Select>
                <Select $w={73}>
                  12
                  <Chevron />
                </Select>
                <Slot $w={28}>
                  <GrowA />
                </Slot>
                <Slot $w={27}>
                  <GrowA down />
                </Slot>
              </ToolRow>
              <ToolRow $h={24}>
                <Slot $w={26}>
                  <Glyph $bold>B</Glyph>
                </Slot>
                <Slot $w={32}>
                  <Glyph $it $bold $font={`"Liberation Sans", sans-serif`}>
                    I
                  </Glyph>
                </Slot>
                <Slot $w={24}>
                  <Glyph $under $bold>
                    U
                  </Glyph>
                </Slot>
                <Slot $w={18}>
                  <Caret />
                </Slot>
                <Slot $w={6}>
                  <VSep />
                </Slot>
                <Slot $w={30}>
                  <BorderIcon />
                </Slot>
                <Slot $w={14}>
                  <Caret />
                </Slot>
                <Slot $w={10}>
                  <VSep />
                </Slot>
                <Slot $w={26}>
                  <FillIcon />
                </Slot>
                <Slot $w={18}>
                  <Caret />
                </Slot>
                <Slot $w={26}>
                  <ColorA $c="#ff0000">A</ColorA>
                </Slot>
                <Slot $w={14}>
                  <Caret />
                </Slot>
              </ToolRow>
            </ToolCol>
          </GroupBody>
          <GroupLabel $launcher>Font</GroupLabel>
          <Launcher>
            <LauncherIcon />
          </Launcher>
        </Group>

        <Group $w={340}>
          <GroupBody>
            <ToolCol>
              <ToolRow $h={29} $pad={11}>
                <Slot $w={28}>
                  <Lines rows={[[4, 22, 4], [4, 22, 8], [6, 20, 12]]} />
                </Slot>
                <Slot $w={28}>
                  <Lines rows={[[5, 21, 7], [5, 21, 11], [7, 19, 15]]} />
                </Slot>
                <Slot $w={28} $on>
                  <Lines rows={[[5, 21, 10], [5, 21, 14], [7, 19, 18]]} />
                </Slot>
                <Slot $w={8}>
                  <VSep />
                </Slot>
                <Slot $w={27}>
                  <OrientIcon />
                </Slot>
                <Slot $w={12}>
                  <Caret />
                </Slot>
                <Slot $w={12} />
                <Slot $w={22}>
                  <VSep $tall />
                </Slot>
                <Slot $w={18}>
                  <WrapIcon />
                </Slot>
                <Slot $w={5} />
                Wrap Text
              </ToolRow>
              <ToolRow $h={21} $pad={11}>
                <Slot $w={28}>
                  <Lines rows={[[6, 20, 5], [6, 16, 9], [6, 20, 13], [6, 16, 17]]} />
                </Slot>
                <Slot $w={28}>
                  <Lines rows={[[5, 21, 5], [8, 18, 9], [5, 21, 13], [8, 18, 17]]} />
                </Slot>
                <Slot $w={28}>
                  <Lines rows={[[6, 20, 5], [10, 20, 9], [6, 20, 13], [10, 20, 17]]} />
                </Slot>
                <Slot $w={8}>
                  <VSep />
                </Slot>
                <Slot $w={1} />
                <Slot $w={28}>
                  <IndentIcon out />
                </Slot>
                <Slot $w={28}>
                  <IndentIcon />
                </Slot>
                <Slot $w={15} />
                <Slot $w={19}>
                  <MergeIcon />
                </Slot>
                <Slot $w={5} />
                Merge &amp; Center
                <Caret $gap={13} />
              </ToolRow>
            </ToolCol>
          </GroupBody>
          <GroupLabel $launcher>Alignment</GroupLabel>
          <Launcher>
            <LauncherIcon />
          </Launcher>
        </Group>

        <Group $w={184}>
          <GroupBody $pad={10}>
            <ToolCol>
              <ToolRow>
                <Select $w={164}>
                  General
                  <Chevron />
                </Select>
              </ToolRow>
              <ToolRow $h={24}>
                <Slot $w={26}>
                  <CurrencyIcon />
                </Slot>
                <Slot $w={18}>
                  <Caret />
                </Slot>
                <Slot $w={26}>
                  <Glyph $size={17}>%</Glyph>
                </Slot>
                <Slot $w={30}>
                  <Glyph $bold $size={19} $lift={10} $font={`"Liberation Serif", serif`}>
                    ,
                  </Glyph>
                </Slot>
                <Slot $w={6}>
                  <VSep />
                </Slot>
                <Slot $w={30}>
                  <Decimal more />
                </Slot>
                <Slot $w={26}>
                  <Decimal />
                </Slot>
              </ToolRow>
            </ToolCol>
          </GroupBody>
          <GroupLabel $launcher>Number</GroupLabel>
          <Launcher>
            <LauncherIcon />
          </Launcher>
        </Group>

        <Group $w={472}>
          <GroupBody $pad={13}>
            <Big $w={80}>
              <BigIcon>
                <CondIcon />
              </BigIcon>
              <span>Conditional</span>
              <span>
                Formatting <Caret />
              </span>
            </Big>
            <Slot $w={4} />
            <Big $w={72}>
              <BigIcon>
                <TableIcon />
              </BigIcon>
              <span>Format as</span>
              <span>
                Table <Caret />
              </span>
            </Big>
            <Gallery>
              <StyleGrid>
                <StyleCell $m="2px 0 0 0" $pad={9} $size={16.5}>
                  Normal 2
                </StyleCell>
                <StyleCell $sel $m="2px 0 2px 4px" $pad={5} $size={18.5}>
                  Normal
                </StyleCell>
                <StyleCell $bg="#ffc7ce" $fg="#9c0006" $m="3px 0 5px 4px" $pad={5} $size={18.5}>
                  Bad
                </StyleCell>
                <StyleCell $bg="#c6efce" $fg="#006100" $m="3px 5px 5px 8px" $pad={5} $size={18.5}>
                  Good
                </StyleCell>
              </StyleGrid>
              <GalleryScroll>
                <ScrollCell $h={25}>
                  <Chevron up c="#bbb" w={13} />
                </ScrollCell>
                <ScrollCell $h={24}>
                  <Chevron c="#555" w={15} />
                </ScrollCell>
                <ScrollCell $h={27}>
                  <Lines w={15} h={2} rows={[[0, 15, 1]]} />
                  <Chevron c="#555" w={15} />
                </ScrollCell>
              </GalleryScroll>
            </Gallery>
          </GroupBody>
          <GroupLabel>Styles</GroupLabel>
        </Group>

        <Group $w={175}>
          <GroupBody $pad={10}>
            <Big $w={52}>
              <BigIcon>
                <InsertIcon />
              </BigIcon>
              <span>Insert</span>
              <BigCaret>
                <Caret />
              </BigCaret>
            </Big>
            <Big $w={52}>
              <BigIcon>
                <DeleteIcon />
              </BigIcon>
              <span>Delete</span>
              <BigCaret>
                <Caret />
              </BigCaret>
            </Big>
            <Big $w={52}>
              <BigIcon>
                <FormatIcon />
              </BigIcon>
              <span>Format</span>
              <BigCaret>
                <Caret />
              </BigCaret>
            </Big>
          </GroupBody>
          <GroupLabel>Cells</GroupLabel>
        </Group>

        <Group $w={241}>
          <GroupBody $pad={15}>
            <SmallCol $w={109}>
              <SmallRow>
                <IconBox $w={18}>
                  <SigmaIcon />
                </IconBox>
                AutoSum
                <Caret $gap={8} />
              </SmallRow>
              <SmallRow>
                <IconBox $w={18}>
                  <FillDown />
                </IconBox>
                Fill
                <Caret $gap={-4} />
              </SmallRow>
              <SmallRow>
                <IconBox $w={18}>
                  <Eraser />
                </IconBox>
                Clear
                <Caret $gap={-4} />
              </SmallRow>
            </SmallCol>
            <Big $w={52}>
              <BigIcon>
                <SortIcon />
              </BigIcon>
              <span>Sort &amp;</span>
              <span>
                Filter <Caret />
              </span>
            </Big>
            <Big $w={54}>
              <BigIcon>
                <FindIcon />
              </BigIcon>
              <span>Find &amp;</span>
              <span>
                Select <Caret />
              </span>
            </Big>
          </GroupBody>
          <GroupLabel>Editing</GroupLabel>
        </Group>
        <Collapse>
          <Chevron up w={13} />
        </Collapse>
      </Ribbon>

      <FormulaBar>
        <NameBox>
          H15
          <Caret />
        </NameBox>
        <Grip>
          <GripDots />
        </Grip>
        <FnBox>
          <svg width="16" height="16" stroke="#c2c2c2" strokeWidth="1.800">
            <path d="M2 2l12 12M14 2L2 14" />
          </svg>
          <svg width="18" height="16" fill="none" stroke="#c2c2c2" strokeWidth="2">
            <path d="M2 9l5 6 9-14" />
          </svg>
          <FxText>fx</FxText>
        </FnBox>
        <FormulaInput>
          <Chevron up w={9} />
        </FormulaInput>
      </FormulaBar>

      <SheetArea>
        <Grid>
          <Corner>
            <svg width="29" height="30">
              <path d="M29 0v30H0z" fill="#b8b8b8" />
            </svg>
          </Corner>
          {COLS.map((c) => (
            <ColHead key={c} $on={c === "H"}>
              {c}
            </ColHead>
          ))}
          {ROWS.map((r) => (
            <RowHead key={r} $row={r} $on={r === 15}>
              {r}
            </RowHead>
          ))}
          <Banner>Company Name</Banner>
          <Cell $row={6} $from={1} $to={3}>
            <span>
              Employee Name<Star>*</Star>
            </span>
          </Cell>
          <Cell $row={6} $from={4} $to={6}>
            Rahul Kumar Pathak
          </Cell>
          <Cell $row={8} $from={1} $to={2} $size={25}>
            First Name
          </Cell>
          <Cell $row={8} $from={3} $to={4} $size={25.5}>
            Mid Name
          </Cell>
          <Cell $row={8} $from={5} $to={6} $size={25}>
            Last Name
          </Cell>
          <Cell $row={9} $from={1} $to={2} $shift={-4}>
            Rahul
          </Cell>
          <Cell $row={9} $from={3} $to={4} $shift={4}>
            Kumar
          </Cell>
          <Cell $row={9} $from={5} $to={6}>
            Pathak
          </Cell>
          <Cell $row={11} $from={1} $to={3}>
            <span>
              Date of Birth<Star>*</Star>
            </span>
          </Cell>
          <Cell $row={11} $from={4} $to={6} $size={24}>
            20-10-1994
          </Cell>

          <MessageBox>
            <div>Dear Rahul Kumar Pathak</div>
            <div>Your age as on Today is</div>
            <div>26 years 2 months 3 days</div>
          </MessageBox>
          <MacroButton $left={258} $top="#6283cc" $mid="#4a72c8" $bot="#2f5fb8">
            Clear
          </MacroButton>
          <MacroButton $left={443} $top="#f38c55" $mid="#f57c2f" $bot="#e56a15">
            Print
          </MacroButton>
          <Selection />
        </Grid>
        <VScroll>
          <VGap $h={2} />
          <ScrollBtn $h={18}>
            <TriV />
          </ScrollBtn>
          <VThumb />
          <VGap $h={100} />
          <ScrollBtn $h={18}>
            <TriV down />
          </ScrollBtn>
        </VScroll>
      </SheetArea>

      <TabBar>
        <NavArrows>
          <TriLeft />
          <TriRight />
        </NavArrows>
        <TabDivider />
        <SheetTab $w={53}>Pics</SheetTab>
        <SheetTab $active $w={80}>
          Sheet1
        </SheetTab>
        <SheetTab $w={78}>Sheet2</SheetTab>
        <TabDivider />
        <SheetTab $w={78}>Sheet3</SheetTab>
        <TabDivider />
        <AddSheet>+</AddSheet>
        <HGrip>
          <GripDots />
        </HGrip>
        <HScroll>
          <ScrollBtn $w={19} $h={19}>
            <TriLeft c="#666" />
          </ScrollBtn>
          <HThumb />
          <HFill />
          <ScrollBtn $w={18} $h={19}>
            <TriRight c="#666" />
          </ScrollBtn>
        </HScroll>
      </TabBar>

      <StatusBar>
        <MacroIcon />
        <Views>
          <ViewBtn $on>
            <NormalView />
          </ViewBtn>
          <ViewBtn>
            <PageView />
          </ViewBtn>
          <ViewBtn>
            <BreakView />
          </ViewBtn>
          <Zoom>
            <span>−</span>
            <ZoomTrack>
              <ZoomThumb />
            </ZoomTrack>
            <span>+</span>
            <ZoomPct>140%</ZoomPct>
          </Zoom>
        </Views>
      </StatusBar>

      <Taskbar>
        <StartBtn>
          <WinLogo />
        </StartBtn>
        <SearchBox>
          <Lens />
          Type here to search
        </SearchBox>
        <TaskSlot $w={60}>
          <CortanaIcon />
        </TaskSlot>
        <TaskSlot $w={60}>
          <TaskViewIcon />
        </TaskSlot>
        <TaskSlot $open $ml={3}>
          <EdgeIcon />
        </TaskSlot>
        <TaskSlot $open>
          <FolderIcon />
        </TaskSlot>
        <TaskSlot>
          <MailIcon />
        </TaskSlot>
        <TaskSlot>
          <DropboxIcon />
        </TaskSlot>
        <TaskSlot>
          <ChromeIcon />
        </TaskSlot>
        <TaskSlot>
          <NIcon />
        </TaskSlot>
        <TaskSlot>
          <FirefoxIcon />
        </TaskSlot>
        <TaskSlot $open $active>
          <ExcelIcon />
        </TaskSlot>
        <TaskSlot $open>
          <SearchApp />
        </TaskSlot>
        <Tray>
          <TrayItem $w={30}>
            <TrayChevron />
          </TrayItem>
          <TrayItem $w={30}>
            <BatteryIcon />
          </TrayItem>
          <TrayItem $w={30}>
            <WifiIcon />
          </TrayItem>
          <TrayItem $w={28}>
            <VolumeIcon />
          </TrayItem>
          <TrayItem $w={42}>
            <PenIcon />
          </TrayItem>
          <TrayItem $w={42}>ENG</TrayItem>
          <Clock>
            <div>16:54</div>
            <div>23-12-2020</div>
          </Clock>
          <Notify>
            <NotifyIcon />
            <Badge>24</Badge>
          </Notify>
        </Tray>
      </Taskbar>

      <Watermark>
        <WmTitle>Activate Windows</WmTitle>
        <WmSub>Go to Settings to activate Windows.</WmSub>
      </Watermark>
    </Page>
  );
}
